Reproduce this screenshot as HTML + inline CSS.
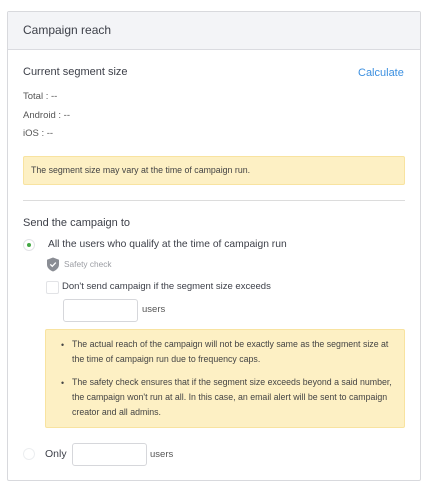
<!DOCTYPE html>
<html><head><meta charset="utf-8"><style>
*{box-sizing:border-box;margin:0;padding:0}
body{width:436px;height:495px;background:#fff;font-family:"Liberation Sans",sans-serif;color:#444;position:relative;overflow:hidden}
.a{position:absolute;white-space:nowrap}
.card{position:absolute;left:7px;top:11px;width:414px;height:470px;border:1px solid #d8d9dd;border-radius:2px}
.hdr{position:absolute;left:0;top:0;width:100%;height:38px;background:#f3f4f7;border-bottom:1px solid #dadbe0}
.yb{position:absolute;background:#fdf0c4;border:1px solid #f8e3a0;border-radius:2px}
.inp{position:absolute;border:1px solid #d6d7db;border-radius:3px;background:#fff}
</style></head><body>
<div class="card"><div class="hdr"></div></div>
<div class="a" style="left:23px;top:23px;font-size:12px;color:#3c3f48">Campaign reach</div>
<div class="a" style="left:23px;top:66px;font-size:11px;color:#3c3f48">Current segment size</div>
<div class="a" style="left:358px;top:67px;font-size:11px;color:#3b8fe0">Calculate</div>
<div class="a" style="left:23px;top:91px;font-size:9.5px;color:#555">Total : --</div>
<div class="a" style="left:23px;top:110px;font-size:9.5px;color:#555">Android : --</div>
<div class="a" style="left:23px;top:128px;font-size:9.5px;color:#555">iOS : --</div>
<div class="yb" style="left:23px;top:156px;width:382px;height:29px"></div>
<div class="a" style="left:31px;top:165px;font-size:8.8px;color:#444">The segment size may vary at the time of campaign run.</div>
<div class="a" style="left:23px;top:200px;width:382px;height:1px;background:#dcdcdc"></div>
<div class="a" style="left:23px;top:217px;font-size:11px;color:#3c3f48">Send the campaign to</div>
<div class="a" style="left:23px;top:239px;width:12px;height:12px;border:1px solid #e2e3e6;border-radius:50%"></div>
<div class="a" style="left:27px;top:243px;width:4px;height:4px;background:#45a845;border-radius:50%"></div>
<div class="a" style="left:48px;top:239px;font-size:10.3px;color:#3c3f48">All the users who qualify at the time of campaign run</div>
<svg class="a" style="left:46px;top:257px" width="14" height="15" viewBox="0 0 14 15"><path d="M7 0.5L13 2.8V7.5C13 10.8 10.3 13.3 7 14.5C3.7 13.3 1 10.8 1 7.5V2.8Z" fill="#8a8d94"/><path d="M4.3 7.4L6.3 9.3L9.8 5.6" stroke="#fff" stroke-width="1.3" fill="none"/></svg>
<div class="a" style="left:64px;top:259px;font-size:8.3px;color:#9a9ca2">Safety check</div>
<div class="a" style="left:46px;top:281px;width:13px;height:13px;border:1px solid #e2e3e6;border-radius:2px"></div>
<div class="a" style="left:62px;top:281px;font-size:9.5px;color:#3c3f48">Don't send campaign if the segment size exceeds</div>
<div class="inp" style="left:63px;top:299px;width:75px;height:23px"></div>
<div class="a" style="left:142px;top:304px;font-size:9.5px;color:#555">users</div>
<div class="yb" style="left:45px;top:329px;width:360px;height:99px"></div>
<div class="a" style="left:61px;top:338px;font-size:8.8px;line-height:15px;color:#444">•</div>
<div class="a" style="left:72px;top:337px;font-size:8.8px;line-height:15px;color:#444">The actual reach of the campaign will not be exactly same as the segment size at<br>the time of campaign run due to frequency caps.</div>
<div class="a" style="left:61px;top:376px;font-size:8.8px;line-height:15px;color:#444">•</div>
<div class="a" style="left:72px;top:375px;font-size:8.8px;line-height:15px;color:#444">The safety check ensures that if the segment size exceeds beyond a said number,<br>the campaign won't run at all. In this case, an email alert will be sent to campaign<br>creator and all admins.</div>
<div class="a" style="left:23px;top:448px;width:12px;height:12px;border:1px solid #eceef0;border-radius:50%"></div>
<div class="a" style="left:45px;top:448px;font-size:10.5px;color:#3c3f48">Only</div>
<div class="inp" style="left:72px;top:443px;width:75px;height:23px"></div>
<div class="a" style="left:150px;top:449px;font-size:9.5px;color:#555">users</div>
</body></html>
